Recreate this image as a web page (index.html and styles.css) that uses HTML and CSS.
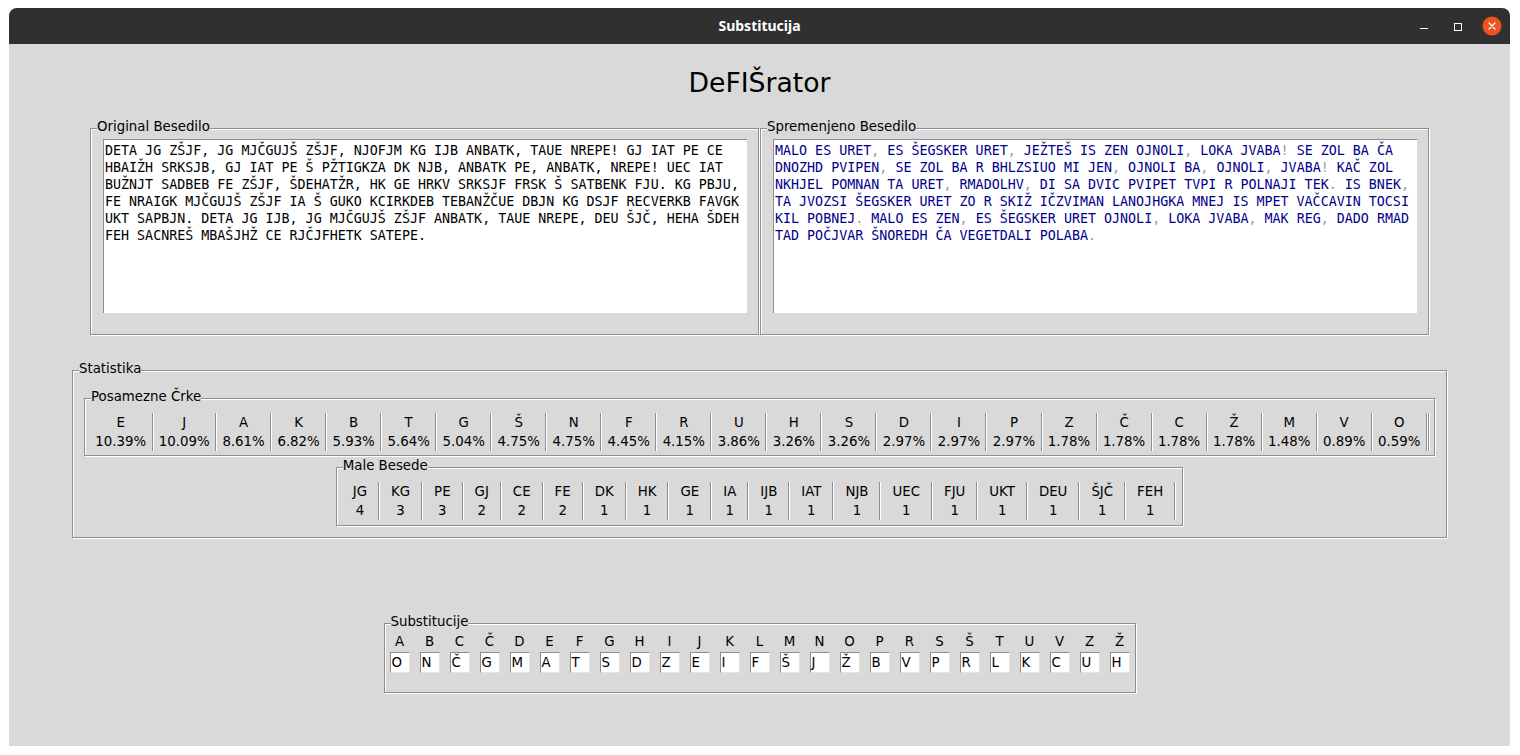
FILE: index.html
```html
<!DOCTYPE html>
<html lang="sl">
<head>
<meta charset="utf-8">
<title>Substitucija</title>
<link rel="stylesheet" href="styles.css">
</head>
<body>
<div class="window">
  <header class="titlebar">
    <span class="spacer"></span>
    <span class="title">Substitucija</span>
    <svg class="controls" width="96" height="36" viewBox="0 0 96 36">
      <line x1="10" y1="20.5" x2="18" y2="20.5" stroke="#fff" stroke-width="1"/>
      <rect x="44.5" y="15.5" width="7" height="7" fill="none" stroke="#fff" stroke-width="1"/>
      <circle cx="82" cy="18" r="9.5" fill="#e95420"/>
      <path d="M79 15 L85 21 M85 15 L79 21" stroke="#fff" stroke-width="1.3" stroke-linecap="round"/>
    </svg>
  </header>
  <main class="content">
    <h1 class="app-title">DeFIŠrator</h1>
    <div class="text-row">
      <section class="frame text-frame">
        <div class="frame-label">Original Besedilo</div>
        <div class="frame-body text-body">
          <div class="textbox">
            <div class="line">DETA JG ZŠJF, JG MJČGUJŠ ZŠJF, NJOFJM KG IJB ANBATK, TAUE NREPE! GJ IAT PE CE</div>
            <div class="line">HBAIŽH SRKSJB, GJ IAT PE Š PŽTIGKZA DK NJB, ANBATK PE, ANBATK, NREPE! UEC IAT</div>
            <div class="line">BUŽNJT SADBEB FE ZŠJF, ŠDEHATŽR, HK GE HRKV SRKSJF FRSK Š SATBENK FJU. KG PBJU,</div>
            <div class="line">FE NRAIGK MJČGUJŠ ZŠJF IA Š GUKO KCIRKDEB TEBANŽČUE DBJN KG DSJF RECVERKB FAVGK</div>
            <div class="line">UKT SAPBJN. DETA JG IJB, JG MJČGUJŠ ZŠJF ANBATK, TAUE NREPE, DEU ŠJČ, HEHA ŠDEH</div>
            <div class="line">FEH SACNREŠ MBAŠJHŽ CE RJČJFHETK SATEPE.</div>
          </div>
        </div>
      </section>
      <section class="frame text-frame">
        <div class="frame-label">Spremenjeno Besedilo</div>
        <div class="frame-body text-body">
          <div class="textbox changed">
            <div class="line"><span>MALO ES URET</span><span class="p">,</span><span> ES ŠEGSKER URET</span><span class="p">,</span><span> JEŽTEŠ IS ZEN OJNOLI</span><span class="p">,</span><span> LOKA JVABA</span><span class="p">!</span><span> SE ZOL BA ČA</span></div>
            <div class="line"><span>DNOZHD PVIPEN</span><span class="p">,</span><span> SE ZOL BA R BHLZSIUO MI JEN</span><span class="p">,</span><span> OJNOLI BA</span><span class="p">,</span><span> OJNOLI</span><span class="p">,</span><span> JVABA</span><span class="p">!</span><span> KAČ ZOL</span></div>
            <div class="line"><span>NKHJEL POMNAN TA URET</span><span class="p">,</span><span> RMADOLHV</span><span class="p">,</span><span> DI SA DVIC PVIPET TVPI R POLNAJI TEK</span><span class="p">.</span><span> IS BNEK</span><span class="p">,</span></div>
            <div class="line"><span>TA JVOZSI ŠEGSKER URET ZO R SKIŽ IČZVIMAN LANOJHGKA MNEJ IS MPET VAČCAVIN TOCSI</span></div>
            <div class="line"><span>KIL POBNEJ</span><span class="p">.</span><span> MALO ES ZEN</span><span class="p">,</span><span> ES ŠEGSKER URET OJNOLI</span><span class="p">,</span><span> LOKA JVABA</span><span class="p">,</span><span> MAK REG</span><span class="p">,</span><span> DADO RMAD</span></div>
            <div class="line"><span>TAD POČJVAR ŠNOREDH ČA VEGETDALI POLABA</span><span class="p">.</span></div>
          </div>
        </div>
      </section>
    </div>

    <section class="frame stats">
      <div class="frame-label">Statistika</div>
      <div class="frame-body stats-body">
        <section class="frame letters">
          <div class="frame-label">Posamezne Črke</div>
          <div class="frame-body cells letters-body">
            <div class="cell"><span>E</span><span>10.39%</span></div><div class="sep"></div>
            <div class="cell"><span>J</span><span>10.09%</span></div><div class="sep"></div>
            <div class="cell"><span>A</span><span>8.61%</span></div><div class="sep"></div>
            <div class="cell"><span>K</span><span>6.82%</span></div><div class="sep"></div>
            <div class="cell"><span>B</span><span>5.93%</span></div><div class="sep"></div>
            <div class="cell"><span>T</span><span>5.64%</span></div><div class="sep"></div>
            <div class="cell"><span>G</span><span>5.04%</span></div><div class="sep"></div>
            <div class="cell"><span>Š</span><span>4.75%</span></div><div class="sep"></div>
            <div class="cell"><span>N</span><span>4.75%</span></div><div class="sep"></div>
            <div class="cell"><span>F</span><span>4.45%</span></div><div class="sep"></div>
            <div class="cell"><span>R</span><span>4.15%</span></div><div class="sep"></div>
            <div class="cell"><span>U</span><span>3.86%</span></div><div class="sep"></div>
            <div class="cell"><span>H</span><span>3.26%</span></div><div class="sep"></div>
            <div class="cell"><span>S</span><span>3.26%</span></div><div class="sep"></div>
            <div class="cell"><span>D</span><span>2.97%</span></div><div class="sep"></div>
            <div class="cell"><span>I</span><span>2.97%</span></div><div class="sep"></div>
            <div class="cell"><span>P</span><span>2.97%</span></div><div class="sep"></div>
            <div class="cell"><span>Z</span><span>1.78%</span></div><div class="sep"></div>
            <div class="cell"><span>Č</span><span>1.78%</span></div><div class="sep"></div>
            <div class="cell"><span>C</span><span>1.78%</span></div><div class="sep"></div>
            <div class="cell"><span>Ž</span><span>1.78%</span></div><div class="sep"></div>
            <div class="cell"><span>M</span><span>1.48%</span></div><div class="sep"></div>
            <div class="cell"><span>V</span><span>0.89%</span></div><div class="sep"></div>
            <div class="cell"><span>O</span><span>0.59%</span></div><div class="sep"></div><div class="sep"></div>
          </div>
        </section>
        <section class="frame words">
          <div class="frame-label">Male Besede</div>
          <div class="frame-body cells words-body">
            <div class="cell"><span>JG</span><span>4</span></div><div class="sep"></div>
            <div class="cell"><span>KG</span><span>3</span></div><div class="sep"></div>
            <div class="cell"><span>PE</span><span>3</span></div><div class="sep"></div>
            <div class="cell"><span>GJ</span><span>2</span></div><div class="sep"></div>
            <div class="cell"><span>CE</span><span>2</span></div><div class="sep"></div>
            <div class="cell"><span>FE</span><span>2</span></div><div class="sep"></div>
            <div class="cell"><span>DK</span><span>1</span></div><div class="sep"></div>
            <div class="cell"><span>HK</span><span>1</span></div><div class="sep"></div>
            <div class="cell"><span>GE</span><span>1</span></div><div class="sep"></div>
            <div class="cell"><span>IA</span><span>1</span></div><div class="sep"></div>
            <div class="cell"><span>IJB</span><span>1</span></div><div class="sep"></div>
            <div class="cell"><span>IAT</span><span>1</span></div><div class="sep"></div>
            <div class="cell"><span>NJB</span><span>1</span></div><div class="sep"></div>
            <div class="cell"><span>UEC</span><span>1</span></div><div class="sep"></div>
            <div class="cell"><span>FJU</span><span>1</span></div><div class="sep"></div>
            <div class="cell"><span>UKT</span><span>1</span></div><div class="sep"></div>
            <div class="cell"><span>DEU</span><span>1</span></div><div class="sep"></div>
            <div class="cell"><span>ŠJČ</span><span>1</span></div><div class="sep"></div>
            <div class="cell"><span>FEH</span><span>1</span></div><div class="sep"></div>
          </div>
        </section>
      </div>
    </section>

    <section class="frame subs">
      <div class="frame-label">Substitucije</div>
      <div class="frame-body subs-grid">
        <div class="sub"><span>A</span><span class="entry">O</span></div>
        <div class="sub"><span>B</span><span class="entry">N</span></div>
        <div class="sub"><span>C</span><span class="entry">Č</span></div>
        <div class="sub"><span>Č</span><span class="entry">G</span></div>
        <div class="sub"><span>D</span><span class="entry">M</span></div>
        <div class="sub"><span>E</span><span class="entry">A</span></div>
        <div class="sub"><span>F</span><span class="entry">T</span></div>
        <div class="sub"><span>G</span><span class="entry">S</span></div>
        <div class="sub"><span>H</span><span class="entry">D</span></div>
        <div class="sub"><span>I</span><span class="entry">Z</span></div>
        <div class="sub"><span>J</span><span class="entry">E</span></div>
        <div class="sub"><span>K</span><span class="entry">I</span></div>
        <div class="sub"><span>L</span><span class="entry">F</span></div>
        <div class="sub"><span>M</span><span class="entry">Š</span></div>
        <div class="sub"><span>N</span><span class="entry">J</span></div>
        <div class="sub"><span>O</span><span class="entry">Ž</span></div>
        <div class="sub"><span>P</span><span class="entry">B</span></div>
        <div class="sub"><span>R</span><span class="entry">V</span></div>
        <div class="sub"><span>S</span><span class="entry">P</span></div>
        <div class="sub"><span>Š</span><span class="entry">R</span></div>
        <div class="sub"><span>T</span><span class="entry">L</span></div>
        <div class="sub"><span>U</span><span class="entry">K</span></div>
        <div class="sub"><span>V</span><span class="entry">C</span></div>
        <div class="sub"><span>Z</span><span class="entry">U</span></div>
        <div class="sub"><span>Ž</span><span class="entry">H</span></div>
      </div>
    </section>
  </main>
</div>
</body>
</html>
```
FILE: styles.css
```css
html, body {
  margin: 0;
  padding: 0;
  background: #ffffff;
}

body {
  font-family: "DejaVu Sans", "Liberation Sans", sans-serif;
  font-size: 13.333px;
  color: #000;
}

.window {
  margin: 8px 0 0 9px;
  width: 1501px;
  height: 738px;
  display: flex;
  flex-direction: column;
  background: #d9d9d9;
  border-radius: 8px 8px 0 0;
  overflow: hidden;
}

.titlebar {
  height: 36px;
  flex: none;
  background: #303030;
  display: grid;
  grid-template-columns: 1fr auto 1fr;
  align-items: center;
}

.title {
  color: #fff;
  font-family: "Noto Sans", "DejaVu Sans", sans-serif;
  font-weight: bold;
  font-size: 14px;
  line-height: 36px;
}

.controls {
  justify-self: end;
  margin-right: 4px;
  display: block;
}

.content {
  flex: 1;
  display: flex;
  flex-direction: column;
  align-items: center;
}

.app-title {
  margin: 0;
  padding-top: 23px;
  font-size: 26.667px;
  font-weight: normal;
  line-height: 31px;
}

/* groove frame, like a Tk LabelFrame */
.frame {
  box-sizing: border-box;
  border: 1px solid #8e8e8e;
  box-shadow: inset 1px 1px 0 #fff, 1px 1px 0 #fff;
}

.frame-label {
  position: relative;
  display: block;
  width: fit-content;
  height: 16px;
  line-height: 16px;
  margin: -10px 0 -6px 6px;
  background: #d9d9d9;
  white-space: nowrap;
}

.text-row {
  margin-top: 30px;
  display: flex;
  gap: 1px;
}

.text-frame {
  width: 669px;
  height: 207px;
}

.text-body {
  padding: 10px 0 0 12px;
}

.textbox {
  box-sizing: border-box;
  width: 644px;
  height: 174px;
  background: #fff;
  border-top: 1px solid #8e8e8e;
  border-left: 1px solid #8e8e8e;
  padding: 2px 0 0 1px;
  font-family: "DejaVu Sans Mono", "Liberation Mono", monospace;
  font-size: 13.333px;
  line-height: 17px;
  overflow: hidden;
  color: #000;
}

.line {
  white-space: pre;
  height: 17px;
}

.textbox.changed {
  color: #00008b;
}

.textbox .p {
  color: #9a9a9a;
}

.stats {
  margin-top: 35px;
  width: 1375px;
}

.stats-body {
  padding: 27px 11px 11px;
}

.letters-body {
  padding: 14px 0 4px 5px;
}

.words {
  width: fit-content;
  margin: 11px auto 0;
}

.words-body {
  padding: 14px 6px 5px 5px;
}

.cells {
  display: flex;
}

.cell {
  display: flex;
  flex-direction: column;
  align-items: center;
  line-height: 19px;
  padding: 0 5.35px;
  white-space: nowrap;
}

.words .cell {
  padding: 0 11px;
}

.sep {
  width: 1px;
  background: #8e8e8e;
  border-right: 1px solid #fff;
}

.subs {
  margin-top: 85px;
  width: 752px;
}

.subs-grid {
  display: grid;
  grid-template-columns: repeat(25, 30px);
  padding: 10px 0 19px;
}

.sub {
  display: flex;
  flex-direction: column;
  align-items: center;
  line-height: 16px;
}

.entry {
  box-sizing: border-box;
  margin-top: 2px;
  width: 20px;
  height: 21px;
  background: #fff;
  border: 1px solid;
  border-color: #8e8e8e #e4e4e4 #e4e4e4 #8e8e8e;
  padding-left: 1px;
  line-height: 19px;
  text-align: left;
}
```
